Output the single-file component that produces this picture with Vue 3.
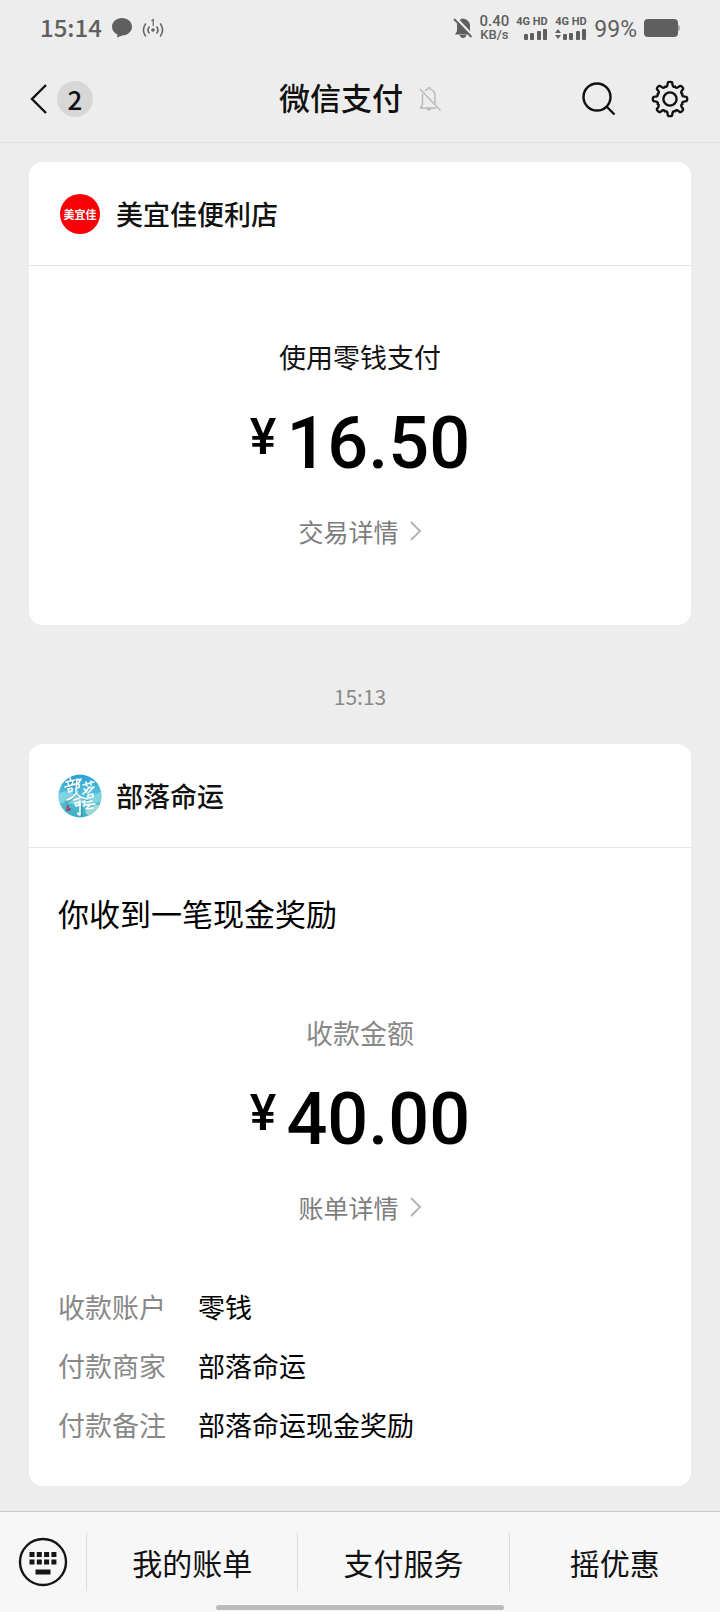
<script setup>
const details = [
  { label: '收款账户', value: '零钱' },
  { label: '付款商家', value: '部落命运' },
  { label: '付款备注', value: '部落命运现金奖励' },
]
const menu = ['我的账单', '支付服务', '摇优惠']
const teeth = [0, 45, 90, 135, 180, 225, 270, 315]

function point(radius, degrees) {
  const a = (degrees * Math.PI) / 180
  return `${(20 + radius * Math.cos(a)).toFixed(2)} ${(20 + radius * Math.sin(a)).toFixed(2)}`
}

const gearPath =
  teeth
    .map((t, i) =>
      [
        `${i ? 'L' : 'M'}${point(15.2, t - 9)}`,
        `C${point(17.2, t - 8)} ${point(17.3, t - 4)} ${point(17.1, t)}`,
        `C${point(17.3, t + 4)} ${point(17.2, t + 8)} ${point(15.2, t + 9)}`,
        `C${point(12.6, t + 12)} ${point(12.4, t + 18)} ${point(13.4, t + 22.5)}`,
        `C${point(12.4, t + 27)} ${point(12.6, t + 33)} ${point(15.2, t + 36)}`,
      ].join(' '),
    )
    .join(' ') + 'Z'
</script>

<template>
  <div class="page">
    <div class="status">
      <span class="clock">15:14</span>
      <svg class="bubble" width="20" height="20" viewBox="0 0 20 20" aria-hidden="true">
        <path d="M10 0C4.500 0 0 3.800 0 8.700c0 3.600 2.300 6.300 5.500 7.700L5 19.500l5.300-2.100C15.700 17.200 20 13.600 20 8.700 20 3.800 15.500 0 10 0z" fill="#5f5f5f" />
      </svg>
      <svg class="hotspot" width="22" height="20" viewBox="0 0 22 20" fill="none" stroke="#666" stroke-width="1.600" aria-hidden="true">
        <circle cx="11" cy="12" r="1.800" fill="#666" stroke="none" />
        <path d="M7.500 8.500q-3 3.500 0 7M14.500 8.500q3 3.500 0 7M3.800 5.500q-4.800 6.500 0 13M18.200 5.500q4.800 6.500 0 13" />
        <path d="M9.500 3l1.700-1.500V8" stroke-width="1.200" />
      </svg>
      <div class="status-right">
        <svg width="20" height="22" viewBox="0 0 20 22" aria-hidden="true">
          <path d="M10 1.500c4 .7 7 3.500 7 7V14l1.500 3.500H2L4 14V8.500c0-3.500 2-6.300 6-7z" fill="#5f5f5f" />
          <path d="M6.500 18h7q-1 3-3.500 3t-3.500-3z" fill="#5f5f5f" />
          <path d="M2.500 .5l17 18" stroke="#ededed" stroke-width="2.500" />
          <path d="M1 2l17.500 18" stroke="#5f5f5f" stroke-width="1.800" />
        </svg>
        <div class="speed"><span class="rate">0.40</span><span>KB/s</span></div>
        <div class="sim">
          <span>4G HD</span>
          <svg width="32" height="12" viewBox="0 0 32 12" fill="#5f5f5f" aria-hidden="true">
            <rect x="8" y="6" width="4" height="6" rx="1" /><rect x="14" y="5" width="4" height="7" rx="1" />
            <rect x="21" y="3" width="4" height="9" rx="1" /><rect x="27" y="1" width="4" height="11" rx="1" />
          </svg>
        </div>
        <div class="sim">
          <span>4G HD</span>
          <svg width="32" height="12" viewBox="0 0 32 12" fill="#5f5f5f" aria-hidden="true">
            <path d="M0 5l3-4 3 4zM0 7h6l-3 4z" />
            <rect x="8" y="6" width="4" height="6" rx="1" /><rect x="14" y="5" width="4" height="7" rx="1" />
            <rect x="21" y="3" width="4" height="9" rx="1" /><rect x="27" y="1" width="4" height="11" rx="1" />
          </svg>
        </div>
        <span class="percent">99%</span>
        <svg width="36" height="18" viewBox="0 0 36 18" aria-hidden="true">
          <rect width="34" height="18" rx="4" fill="#5f5f5f" />
          <path d="M34 6q2 0 2 3t-2 3z" fill="#aaa" />
        </svg>
      </div>
    </div>

    <header class="nav">
      <button class="back" type="button" aria-label="返回">
        <svg width="18" height="30" viewBox="0 0 18 30" fill="none" stroke="#111" stroke-width="2.400" aria-hidden="true">
          <path d="M16 1L2 15l14 14" />
        </svg>
        <span class="badge">2</span>
      </button>
      <div class="heading">
        <h1>微信支付</h1>
        <svg width="22" height="24" viewBox="0 0 22 24" fill="none" stroke="#b8b8b8" stroke-width="1.400" aria-hidden="true">
          <path d="M3.500 7v10.500L1.500 21H17M6 4q1-1.300 2.500-1.700Q9 .7 10 .7t1.500 1.600Q16 3.800 16 8.500v8" />
          <path d="M8 21.500q2 2.500 4 0M1 2l20.500 21.500" />
        </svg>
      </div>
      <div class="actions">
        <button type="button" aria-label="搜索">
          <svg width="36" height="36" viewBox="0 0 36 36" fill="none" stroke="#111" stroke-width="2.400" aria-hidden="true">
            <circle cx="16" cy="16" r="13.500" /><path d="M25.500 25.500l8 8" />
          </svg>
        </button>
        <button type="button" aria-label="设置">
          <svg width="40" height="40" viewBox="0 0 40 40" fill="none" stroke="#111" stroke-width="2.400" stroke-linejoin="round" aria-hidden="true">
            <path :d="gearPath" /><circle cx="20" cy="20" r="6.600" />
          </svg>
        </button>
      </div>
    </header>

    <main class="feed">
      <article class="card">
        <header class="merchant">
          <span class="logo"><span>美宜佳</span></span>
          <h2>美宜佳便利店</h2>
        </header>
        <div class="payment">
          <p class="method">使用零钱支付</p>
          <p class="amount"><span class="yen">¥</span><span>16.50</span></p>
          <a class="more" href="#">交易详情
            <svg width="12" height="20" viewBox="0 0 12 20" fill="none" stroke="#b5b5b5" stroke-width="2" aria-hidden="true"><path d="M1 1l9 9-9 9" /></svg>
          </a>
        </div>
      </article>

      <time class="stamp">15:13</time>

      <article class="card">
        <header class="merchant">
          <svg class="tribe" width="44" height="44" viewBox="0 0 44 44" fill="none" aria-hidden="true">
            <defs>
              <linearGradient id="sea" x1="0" y1="0" x2="0" y2="1">
                <stop offset="0" stop-color="#279fd3" /><stop offset=".5" stop-color="#55c5dc" /><stop offset="1" stop-color="#3aafc0" />
              </linearGradient>
              <clipPath id="round"><circle cx="22" cy="22" r="21.500" /></clipPath>
            </defs>
            <g clip-path="url(#round)">
              <path d="M0 0h44v44H0z" fill="url(#sea)" />
              <path d="M0 20q9-6 18 1t26-4v9q-14 10-26 5T0 31z" fill="#9ce0e2" opacity=".6" />
              <path d="M27 38q8-9 17-7v8l-12 5z" fill="#c4e6d5" opacity=".7" />
              <path d="M10 31l-1 6M12 34l-1 3" stroke="#a33f68" stroke-width="2" />
              <g stroke="#24798f" stroke-width="3" stroke-linecap="round" opacity=".4" transform="translate(1 1)">
                <path d="M8 8l9-2M9 13l10-3M16 19q-4 6-9 8M17 19l12 7M22 27v13" />
              </g>
              <g stroke="#fff" stroke-width="1.600" stroke-linecap="round" stroke-linejoin="round">
                <path d="M12 4l1 3M8 8l9-2M10 9l1 3M15 7l-1 4M7 13l11-3M10 15l1 3M10 15l4-1v3l-3 1M19 5l-1 12M19 6l4-1-3 5q3 2 0 4" />
                <path d="M25 11l11-3M28 8l1 4M33 7v4M26 15l2 1M25 20l3-3M31 13l-3 5M31 14l5-1-6 6M30 21l5-1v3l-5 1z" />
                <path d="M19 18q-4 6-10 8M19 20q4 4 10 5M16 26l6-2M17 29l1 3 3-1v-3zM22 27v14q-2 0-2-2M24 28l3-1-1 5" />
                <path d="M29 28l5-1M28 31l9-1M32 31l-4 4 7-1" />
              </g>
            </g>
          </svg>
          <h2>部落命运</h2>
        </header>
        <div class="reward">
          <p class="headline">你收到一笔现金奖励</p>
          <div class="sum">
            <p class="method muted">收款金额</p>
            <p class="amount"><span class="yen">¥</span><span>40.00</span></p>
            <a class="more" href="#">账单详情
              <svg width="12" height="20" viewBox="0 0 12 20" fill="none" stroke="#b5b5b5" stroke-width="2" aria-hidden="true"><path d="M1 1l9 9-9 9" /></svg>
            </a>
          </div>
          <dl class="details">
            <div v-for="row in details" :key="row.label">
              <dt>{{ row.label }}</dt>
              <dd>{{ row.value }}</dd>
            </div>
          </dl>
        </div>
      </article>
    </main>

    <footer class="bar">
      <button class="keyboard" type="button" aria-label="键盘">
        <svg width="50" height="50" viewBox="0 0 50 50" aria-hidden="true">
          <circle cx="25" cy="25" r="23" fill="none" stroke="#151515" stroke-width="2.400" />
          <g fill="#151515">
            <template v-for="c in 4" :key="c">
              <rect :x="4.2 + c * 7.300" y="15" width="5" height="5" />
              <rect :x="4.2 + c * 7.300" y="22.500" width="5" height="5" />
            </template>
            <rect x="17.500" y="32.500" width="15" height="5" />
          </g>
        </svg>
      </button>
      <button v-for="item in menu" :key="item" class="entry" type="button">{{ item }}</button>
      <span class="home"></span>
    </footer>
  </div>
</template>

<style>
body {
  background: #ededed;
}
</style>

<style scoped>
.page {
  min-height: 100vh;
  display: flex;
  flex-direction: column;
  background: #ededed;
  color: #111;
  font-family: "Noto Sans CJK SC", sans-serif;
}
h1, h2, p, dl, dd {
  margin: 0;
}
svg {
  display: block;
  flex: none;
}
button {
  border: 0;
  padding: 0;
  background: none;
  color: inherit;
  font-family: inherit;
}
.status {
  display: flex;
  align-items: center;
  height: 56px;
  padding: 0 40px;
  color: #5f5f5f;
}
.clock {
  padding-bottom: 2px;
  font-size: 24px;
  font-weight: 500;
  line-height: 32px;
}
.bubble {
  margin-left: 10px;
}
.hotspot {
  margin-left: 10px;
}
.status-right {
  display: flex;
  align-items: center;
  gap: 7px;
  margin-left: auto;
  font-family: Roboto, sans-serif;
}
.speed {
  display: flex;
  flex-direction: column;
  align-items: center;
  font-size: 13px;
  font-weight: 500;
  line-height: 14px;
}
.rate {
  font-size: 15px;
}
.sim {
  display: flex;
  flex-direction: column;
  font-size: 11px;
  font-weight: 700;
  line-height: 12px;
}
.percent {
  padding-top: 3px;
  font-size: 23px;
}
.nav {
  display: grid;
  grid-template-columns: 1fr auto 1fr;
  align-items: center;
  height: 86px;
  padding: 0 30px;
  border-bottom: 1px solid #e0e0e0;
}
.back {
  display: flex;
  align-items: center;
  justify-self: start;
  gap: 9px;
}
.badge {
  width: 36px;
  height: 36px;
  border-radius: 50%;
  background: #d7d7d7;
  font-size: 26px;
  font-weight: 500;
  line-height: 36px;
}
.heading {
  display: flex;
  align-items: center;
  gap: 16px;
}
h1 {
  padding-bottom: 4px;
  font-size: 31px;
  font-weight: 500;
  line-height: 44px;
}
.actions {
  display: flex;
  align-items: center;
  justify-self: end;
  gap: 33px;
}
.feed {
  flex: 1;
  padding: 19px 29px 25px;
}
.card {
  border-radius: 14px;
  background: #fff;
}
.merchant {
  display: flex;
  align-items: center;
  gap: 14px;
  height: 103px;
  padding: 0 29px;
  border-bottom: 1px solid #e5e5e5;
}
.logo {
  display: flex;
  align-items: center;
  justify-content: center;
  width: 40px;
  height: 40px;
  margin: 0 2px;
  border-radius: 50%;
  background: #f80005;
  color: #fff;
  font-size: 11px;
  font-weight: 700;
}
h2 {
  font-size: 27px;
  font-weight: 500;
  line-height: 40px;
}
.payment,
.sum {
  display: flex;
  flex-direction: column;
  align-items: center;
}
.payment {
  padding: 71px 0 74px;
}
.method {
  font-size: 27px;
  line-height: 40px;
}
.muted {
  color: #888;
}
.amount {
  display: flex;
  align-items: flex-start;
  gap: 10px;
  margin: 27px 0;
  color: #000;
  font-family: Roboto, sans-serif;
  font-size: 72px;
  font-weight: 500;
  line-height: 80px;
}
.yen {
  font-size: 50px;
  line-height: 66px;
}
.more {
  display: flex;
  align-items: center;
  gap: 11px;
  color: #7d7d7d;
  font-size: 25px;
  line-height: 40px;
  text-decoration: none;
}
.stamp {
  display: block;
  padding: 51px 0 28px;
  color: #8a8a8a;
  font-size: 21px;
  line-height: 40px;
  text-align: center;
}
.reward {
  padding: 43px 29px 32px;
}
.headline {
  margin-bottom: 78px;
  color: #000;
  font-size: 31px;
  line-height: 44px;
}
.details {
  margin-top: 50px;
  font-size: 27px;
  line-height: 59px;
}
.details div {
  display: flex;
  gap: 32px;
}
.details dt {
  color: #888;
}
.details dd {
  color: #000;
}
.bar {
  position: relative;
  display: flex;
  padding: 21px 0;
  border-top: 1px solid #c8c8c8;
  background: #f7f7f7;
}
.keyboard {
  display: flex;
  align-items: center;
  justify-content: center;
  width: 86px;
}
.entry {
  flex: 1;
  height: 58px;
  border-left: 1px solid #dcdcdc;
  font-size: 30px;
  line-height: 56px;
}
.home {
  position: absolute;
  bottom: 2px;
  left: 30%;
  width: 40%;
  height: 5px;
  border-radius: 3px;
  background: #bbb;
}
</style>
